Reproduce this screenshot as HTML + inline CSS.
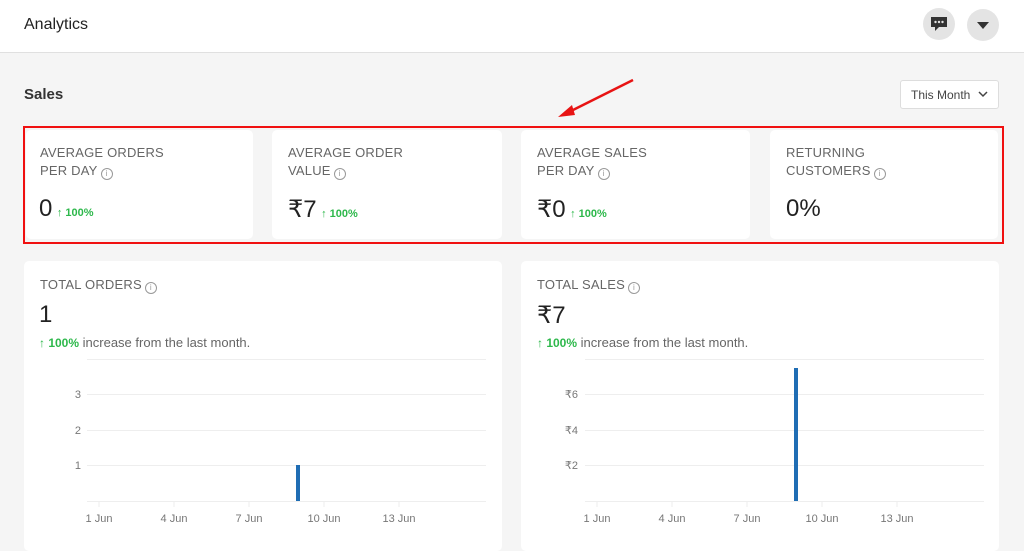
<!DOCTYPE html>
<html><head><meta charset="utf-8"><style>
*{box-sizing:border-box;margin:0;padding:0}
body{width:1024px;height:545px;overflow:hidden;background:#f5f5f5;font-family:"Liberation Sans",sans-serif;position:relative;color:#222}
.a{position:absolute}
.hdr{left:0;top:0;width:1024px;height:53px;background:#fff;border-bottom:1px solid #e0e0e0}
.card{background:#fff;border-radius:5px}
.lbl{font-size:13px;color:#666;line-height:18px;letter-spacing:0.2px}
.val{font-size:24px;color:#222}
.g{color:#2db84b;font-size:11px;font-weight:bold}
.info{display:inline-block;width:12px;height:12px;border:1px solid #999;border-radius:50%;font-size:8px;line-height:10px;text-align:center;color:#999;vertical-align:-1px;margin-left:3px}
</style></head><body>
<div class="a hdr"></div>
<div class="a" style="left:24px;top:16px;font-size:16px;color:#222">Analytics</div>
<div class="a" style="left:923px;top:8px;width:32px;height:32px;border-radius:50%;background:#e4e4e4"></div>
<svg class="a" style="left:930px;top:16px" width="18" height="16" viewBox="0 0 18 16"><path d="M1 1h16v10H9l-4 4v-4H1z" fill="#333"/><circle cx="5.5" cy="6" r="1.2" fill="#e4e4e4"/><circle cx="9" cy="6" r="1.2" fill="#e4e4e4"/><circle cx="12.5" cy="6" r="1.2" fill="#e4e4e4"/></svg>
<div class="a" style="left:967px;top:9px;width:32px;height:32px;border-radius:50%;background:#e4e4e4"></div>
<svg class="a" style="left:977px;top:22px" width="12" height="7"><path d="M0 0h12L6 7z" fill="#333"/></svg>

<div class="a" style="left:24px;top:86px;font-size:15px;font-weight:bold;color:#333">Sales</div>
<div class="a" style="left:900px;top:80px;width:99px;height:29px;background:#fff;border:1px solid #ddd;border-radius:3px;font-size:12px;color:#444;padding:7px 0 0 10px">This Month</div>
<svg class="a" style="left:978px;top:91px" width="10" height="7"><path d="M1 1l4 4 4-4" stroke="#444" stroke-width="1.5" fill="none"/></svg>

<svg class="a" style="left:550px;top:75px" width="90" height="50"><path d="M83 5L15 39" stroke="#e81414" stroke-width="2.5"/><path d="M8 42L22 30L25 40z" fill="#e81414"/></svg>

<div class="a" style="left:23px;top:126px;width:981px;height:118px;border:2px solid #f01010"></div>

<div class="a card" style="left:26px;top:130px;width:227px;height:109px"></div>
<div class="a card" style="left:272px;top:130px;width:230px;height:109px"></div>
<div class="a card" style="left:521px;top:130px;width:229px;height:109px"></div>
<div class="a card" style="left:770px;top:130px;width:228px;height:109px"></div>

<div class="a lbl" style="left:40px;top:144px">AVERAGE ORDERS<br>PER DAY<span class="info">i</span></div>
<div class="a" style="left:39px;top:195px"><span class="val">0</span> <span class="g">↑ 100%</span></div>
<div class="a lbl" style="left:288px;top:144px">AVERAGE ORDER<br>VALUE<span class="info">i</span></div>
<div class="a" style="left:288px;top:195px"><span class="val">₹7</span> <span class="g">↑ 100%</span></div>
<div class="a lbl" style="left:537px;top:144px">AVERAGE SALES<br>PER DAY<span class="info">i</span></div>
<div class="a" style="left:537px;top:195px"><span class="val">₹0</span> <span class="g">↑ 100%</span></div>
<div class="a lbl" style="left:786px;top:144px">RETURNING<br>CUSTOMERS<span class="info">i</span></div>
<div class="a" style="left:786px;top:195px"><span class="val">0%</span></div>

<div class="a card" style="left:24px;top:261px;width:478px;height:290px"></div>
<div class="a card" style="left:521px;top:261px;width:478px;height:290px"></div>

<div class="a lbl" style="left:40px;top:276px">TOTAL ORDERS<span class="info">i</span></div>
<div class="a val" style="left:39px;top:301px">1</div>
<div class="a" style="left:39px;top:335px;font-size:13px;color:#666"><span class="g" style="font-size:12px">↑ 100%</span> increase from the last month.</div>

<div class="a lbl" style="left:537px;top:276px">TOTAL SALES<span class="info">i</span></div>
<div class="a val" style="left:537px;top:301px">₹7</div>
<div class="a" style="left:537px;top:335px;font-size:13px;color:#666"><span class="g" style="font-size:12px">↑ 100%</span> increase from the last month.</div>

<svg class="a" style="left:0;top:350px" width="1024" height="195" font-family="Liberation Sans, sans-serif" font-size="11" fill="#777">
<g stroke="#eee" stroke-width="1">
<path d="M87 9.5H486M87 44.5H486M87 80.5H486M87 115.5H486M87 151.5H486"/>
<path d="M585 9.5H984M585 44.5H984M585 80.5H984M585 115.5H984M585 151.5H984"/>
<path d="M99 151v6M174 151v6M249 151v6M324 151v6M399 151v6"/>
<path d="M597 151v6M672 151v6M747 151v6M822 151v6M897 151v6"/>
</g>
<text x="81" y="48" text-anchor="end">3</text><text x="81" y="84" text-anchor="end">2</text><text x="81" y="119" text-anchor="end">1</text>
<text x="578" y="48" text-anchor="end">₹6</text><text x="578" y="84" text-anchor="end">₹4</text><text x="578" y="119" text-anchor="end">₹2</text>
<g text-anchor="middle"><text x="99" y="172">1 Jun</text><text x="174" y="172">4 Jun</text><text x="249" y="172">7 Jun</text><text x="324" y="172">10 Jun</text><text x="399" y="172">13 Jun</text>
<text x="597" y="172">1 Jun</text><text x="672" y="172">4 Jun</text><text x="747" y="172">7 Jun</text><text x="822" y="172">10 Jun</text><text x="897" y="172">13 Jun</text></g>
<rect x="296" y="115" width="4" height="36" fill="#1f6db4"/>
<rect x="794" y="18" width="4" height="133" fill="#1f6db4"/>
</svg>
</body></html>
